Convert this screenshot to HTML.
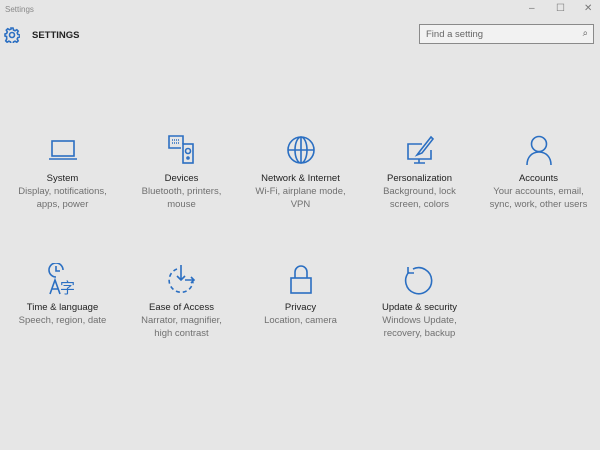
<!DOCTYPE html>
<html><head><meta charset="utf-8"><style>
body{margin:0;width:600px;height:450px;background:#e6e6e6;font-family:"Liberation Sans","Noto Sans CJK SC",sans-serif;position:relative;overflow:hidden;color:#222}
.t{position:absolute;font-size:8px;color:#888;left:5px;top:5px}
.wc{position:absolute;top:3px;font-size:10px;color:#777}
.hdr{position:absolute;left:32px;top:30px;font-size:9.5px;font-weight:bold;color:#222}
.search{position:absolute;left:419px;top:24px;width:175px;height:20px;border:1px solid #8a8a8a;background:#f2f2f2;box-sizing:border-box;font-size:9.5px;color:#666;padding:4px 6px}
.it{position:absolute;width:119px;text-align:center;font-size:9.5px;line-height:13px}
.it svg{display:block;margin:0 auto 6px}
.it b{font-weight:normal;color:#222;display:block}
.it span{color:#707070}
svg *{fill:none;stroke:#2b6fc2;stroke-width:1.6}
svg text{fill:#2b6fc2;stroke:none}
</style></head><body>
<div class="t">Settings</div>
<div class="wc" style="left:529px">–</div>
<div class="wc" style="left:556px">☐</div>
<div class="wc" style="left:584px">✕</div>
<svg style="position:absolute;left:4px;top:27px" width="16" height="16" viewBox="0 0 16 16"><circle cx="8" cy="8" r="2.5"/><path d="M7 1h2l.5 2 1.5.7 1.8-1 1.4 1.4-1 1.8.7 1.6 2 .5v2l-2 .5-.7 1.5 1 1.8-1.4 1.4-1.8-1-1.5.7-.5 2H7l-.5-2-1.6-.7-1.8 1-1.4-1.4 1-1.8L2.6 9.5 1 9V7l1.6-.5.7-1.6-1-1.8 1.4-1.4 1.8 1 1.6-.7z" stroke-width="1"/></svg>
<div class="hdr">SETTINGS</div>
<div class="search">Find a setting<span style="position:absolute;right:5px;top:3px;color:#555">⌕</span></div>

<div class="it" style="left:3px;top:134px"><svg width="32" height="32" viewBox="0 0 32 32"><rect x="5" y="7" width="22" height="15"/><path d="M2 25h28"/></svg><b>System</b><span>Display, notifications,<br>apps, power</span></div>
<div class="it" style="left:122px;top:134px"><svg width="32" height="32" viewBox="0 0 32 32"><path d="M17 10V2H3v12h12"/><path d="M6 6h8M6 9h8" stroke-dasharray="1 1"/><rect x="17" y="10" width="10" height="19"/><circle cx="22" cy="17" r="2.5"/><circle cx="22" cy="24" r="1"/></svg><b>Devices</b><span>Bluetooth, printers,<br>mouse</span></div>
<div class="it" style="left:241px;top:134px"><svg width="32" height="32" viewBox="0 0 32 32"><circle cx="16" cy="16" r="13"/><ellipse cx="16" cy="16" rx="6" ry="13"/><path d="M3 16h26M16 3v26"/></svg><b>Network &amp; Internet</b><span>Wi-Fi, airplane mode,<br>VPN</span></div>
<div class="it" style="left:360px;top:134px"><svg width="32" height="32" viewBox="0 0 32 32"><path d="M18 10H4v15h23v-9M15 25v4M10 29h11"/><path d="M27 3L16 17l-3 4 5-2L29 5z"/></svg><b>Personalization</b><span>Background, lock<br>screen, colors</span></div>
<div class="it" style="left:479px;top:134px"><svg width="32" height="32" viewBox="0 0 32 32"><circle cx="16" cy="10" r="7.5"/><path d="M4 31c0-8 5-13 12-13s12 5 12 13"/></svg><b>Accounts</b><span>Your accounts, email,<br>sync, work, other users</span></div>

<div class="it" style="left:3px;top:263px"><svg width="32" height="32" viewBox="0 0 32 32"><path d="M9 14a7 7 0 1 1 7-7"/><path d="M9 3v5h4"/><path d="M3 31l5-14 5 14M5 26h6"/><text x="13" y="30" font-size="15" font-family="Noto Sans CJK SC,sans-serif">字</text></svg><b>Time &amp; language</b><span>Speech, region, date</span></div>
<div class="it" style="left:122px;top:263px"><svg width="32" height="32" viewBox="0 0 32 32"><path d="M11 6A12 12 0 1 0 27 19" stroke-dasharray="4 3"/><path d="M15 2v15M11 13l4 4 4-4M19 17h9M25 14l3 3-3 3"/></svg><b>Ease of Access</b><span>Narrator, magnifier,<br>high contrast</span></div>
<div class="it" style="left:241px;top:263px"><svg width="32" height="32" viewBox="0 0 32 32"><path d="M10 15V9a6 6 0 0 1 12 0v6"/><rect x="6" y="15" width="20" height="15"/></svg><b>Privacy</b><span>Location, camera</span></div>
<div class="it" style="left:360px;top:263px"><svg width="32" height="32" viewBox="0 0 32 32"><path d="M9 6A13 13 0 1 1 5 9"/><path d="M4 4v6h6" /></svg><b>Update &amp; security</b><span>Windows Update,<br>recovery, backup</span></div>
</body></html>
